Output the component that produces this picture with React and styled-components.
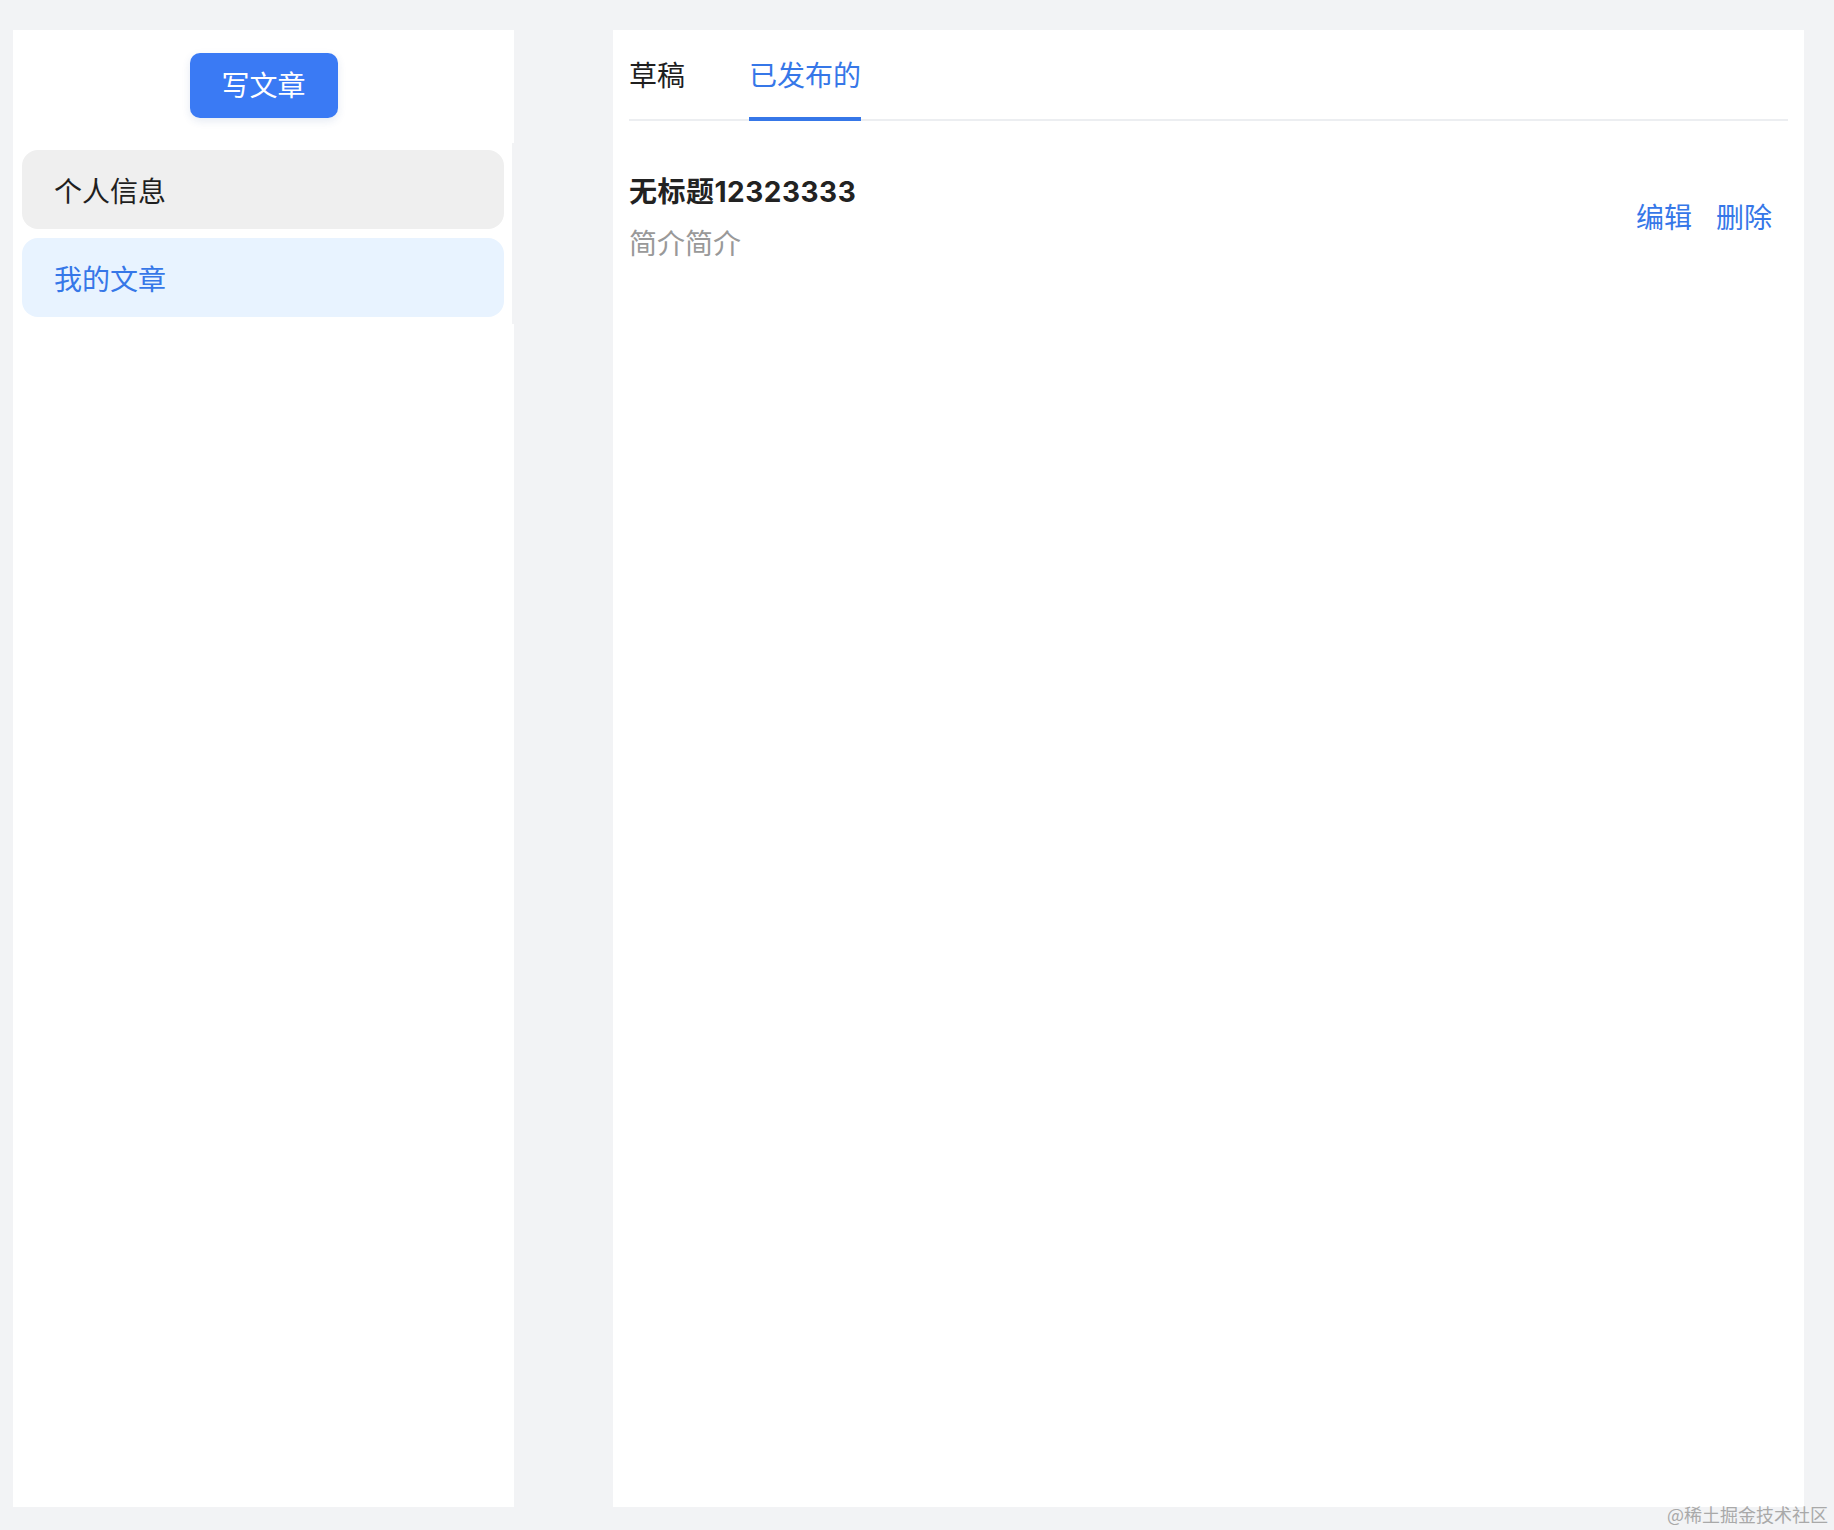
import React, { useState } from 'react';
import styled, { createGlobalStyle } from 'styled-components';

const GlobalStyle = createGlobalStyle`
  html, body {
    margin: 0;
    padding: 0;
    background: #f2f3f5;
    font-family: Inter, "Noto Sans CJK SC", sans-serif;
  }
  * {
    box-sizing: border-box;
  }
`;

const Page = styled.div`
  position: relative;
  display: flex;
  gap: 99px;
  height: 1530px;
  padding: 30px 30px 23px 13px;
  background: #f2f3f5;
`;

const Sidebar = styled.aside`
  display: flex;
  flex-direction: column;
  width: 501px;
  flex-shrink: 0;
`;

const SidebarHeader = styled.div`
  display: flex;
  justify-content: center;
  padding: 23px 0 25px;
  background: #fff;
`;

const WriteButton = styled.button`
  width: 148px;
  height: 65px;
  border: none;
  border-radius: 10px;
  background: #3a7af4;
  color: #fff;
  font-family: inherit;
  font-size: 28px;
  line-height: 1;
  cursor: pointer;
  box-shadow: 0 3px 8px rgba(40, 80, 160, 0.12);
`;

const Menu = styled.nav`
  display: flex;
  flex-direction: column;
  gap: 9px;
  width: calc(100% - 2px);
  padding: 7px 8px 7px 9px;
  background: #fff;
`;

const MenuItem = styled.div`
  height: 79px;
  display: flex;
  align-items: center;
  padding-left: 32px;
  border-radius: 16px;
  font-size: 28px;
  color: ${p => (p.active ? '#3677e8' : '#1f1f1f')};
  background: ${p => (p.active ? '#e8f3ff' : '#efefef')};
  cursor: pointer;
`;

const SidebarFill = styled.div`
  flex: 1;
  background: #fff;
`;

const Main = styled.main`
  flex: 1;
  display: flex;
  flex-direction: column;
  padding: 15px 16px 16px;
  background: #fff;
`;

const TabBar = styled.div`
  display: flex;
  border-bottom: 2px solid #eceef1;
`;

const Tab = styled.div`
  margin-right: 64px;
  margin-bottom: -2px;
  padding: 11px 0 21px;
  font-size: 28px;
  line-height: 40px;
  color: ${p => (p.active ? '#3677e8' : '#1f1f1f')};
  border-bottom: 4px solid ${p => (p.active ? '#3677e8' : 'transparent')};
  cursor: pointer;
`;

const ArticleList = styled.div`
  display: flex;
  flex-direction: column;
  padding-top: 51px;
`;

const ArticleRow = styled.div`
  display: flex;
  align-items: center;
  justify-content: space-between;
  padding-right: 16px;
`;

const ArticleInfo = styled.div`
  display: flex;
  flex-direction: column;
  gap: 12px;
`;

const ArticleTitle = styled.div`
  font-size: 28px;
  line-height: 40px;
  font-weight: 700;
  letter-spacing: 0.5px;
  color: #222;
`;

const ArticleDesc = styled.div`
  font-size: 28px;
  line-height: 40px;
  color: #999;
`;

const Actions = styled.div`
  display: flex;
  gap: 24px;
`;

const ActionLink = styled.span`
  font-size: 28px;
  line-height: 40px;
  color: #3677e8;
  cursor: pointer;
`;

const Watermark = styled.div`
  position: absolute;
  right: 6px;
  bottom: 5px;
  font-size: 18px;
  line-height: 22px;
  color: #a9a9a9;
  font-family: "Noto Sans CJK SC", serif;
`;

const articles = [
  { id: 1, title: '无标题12323333', desc: '简介简介' },
];

export default function App() {
  const [menu, setMenu] = useState('articles');
  const [tab, setTab] = useState('published');

  return (
    <>
      <GlobalStyle />
      <Page>
        <Sidebar>
          <SidebarHeader>
            <WriteButton>写文章</WriteButton>
          </SidebarHeader>
          <Menu>
            <MenuItem active={menu === 'profile' ? 1 : 0} onClick={() => setMenu('profile')}>
              个人信息
            </MenuItem>
            <MenuItem active={menu === 'articles' ? 1 : 0} onClick={() => setMenu('articles')}>
              我的文章
            </MenuItem>
          </Menu>
          <SidebarFill />
        </Sidebar>

        <Main>
          <TabBar>
            <Tab active={tab === 'draft' ? 1 : 0} onClick={() => setTab('draft')}>草稿</Tab>
            <Tab active={tab === 'published' ? 1 : 0} onClick={() => setTab('published')}>已发布的</Tab>
          </TabBar>
          <ArticleList>
            {articles.map(a => (
              <ArticleRow key={a.id}>
                <ArticleInfo>
                  <ArticleTitle>{a.title}</ArticleTitle>
                  <ArticleDesc>{a.desc}</ArticleDesc>
                </ArticleInfo>
                <Actions>
                  <ActionLink>编辑</ActionLink>
                  <ActionLink>删除</ActionLink>
                </Actions>
              </ArticleRow>
            ))}
          </ArticleList>
        </Main>

        <Watermark>@稀土掘金技术社区</Watermark>
      </Page>
    </>
  );
}
